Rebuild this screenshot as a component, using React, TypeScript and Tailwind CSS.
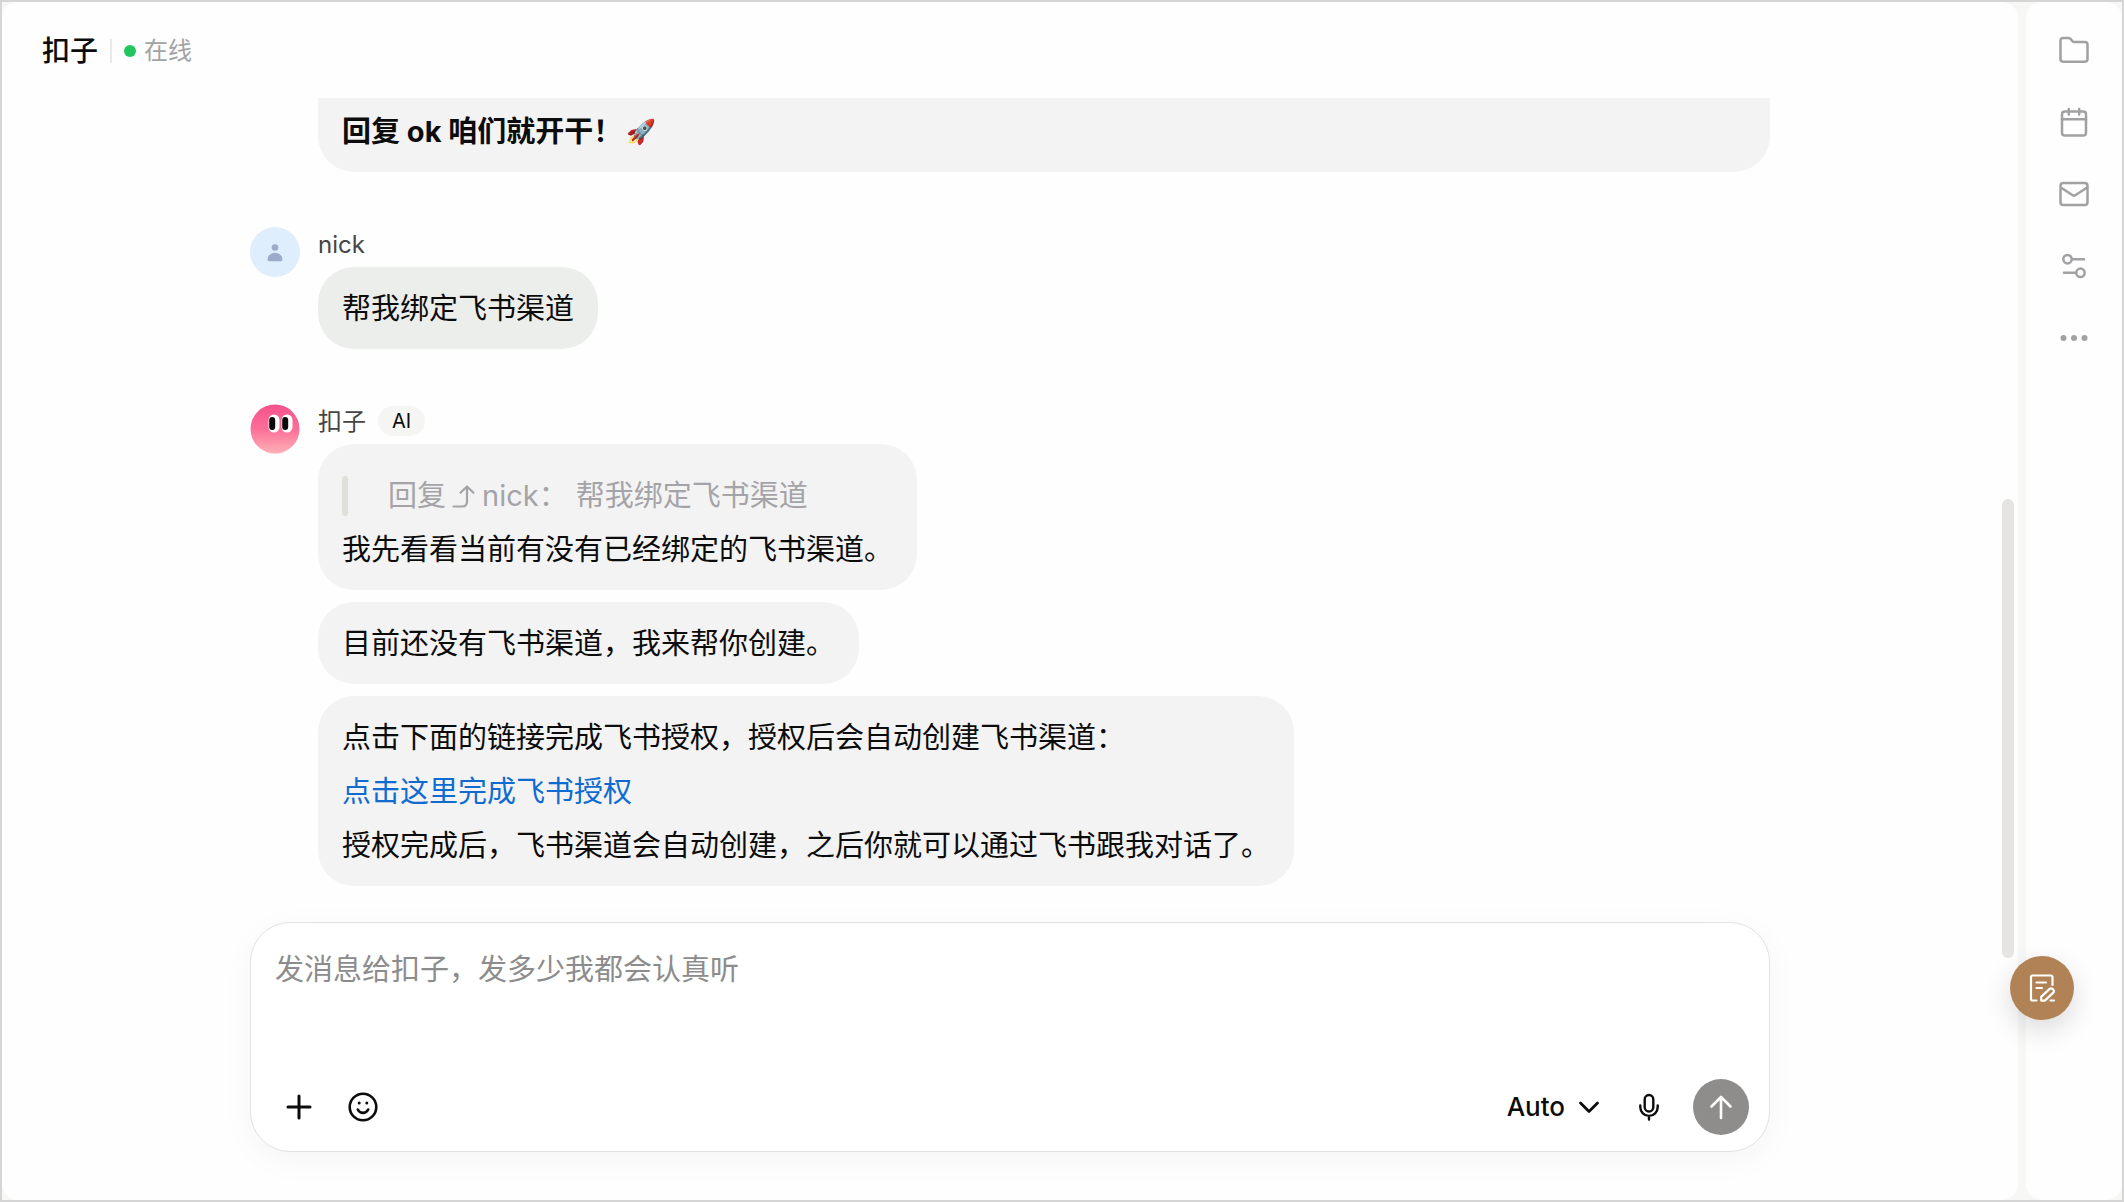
import type { ReactNode } from 'react';

const iconStroke = {
  fill: 'none',
  stroke: 'currentColor',
  strokeLinecap: 'round',
  strokeLinejoin: 'round',
} as const;

function FolderIcon() {
  return (
    <svg className="size-8" viewBox="0 0 32 32" strokeWidth="2.5" {...iconStroke}>
      <path d="M2.5 6.5a2.6 2.6 0 0 1 2.6-2.6h5.2c1 0 1.8.4 2.4 1.2l1.5 2c.5.7 1.2 1 2 1h10.7a2.6 2.6 0 0 1 2.6 2.6v14.4a2.6 2.6 0 0 1-2.6 2.6H5.1a2.6 2.6 0 0 1-2.6-2.6z" />
    </svg>
  );
}

function CalendarIcon() {
  return (
    <svg className="size-8" viewBox="0 0 32 32" strokeWidth="2.5" {...iconStroke}>
      <rect x="4" y="5.5" width="24" height="24" rx="2.8" />
      <path d="M4 13.2h24M10.8 3v5.5M21.2 3v5.5" />
    </svg>
  );
}

function MailIcon() {
  return (
    <svg className="size-8" viewBox="0 0 32 32" strokeWidth="2.5" {...iconStroke}>
      <rect x="2.5" y="5" width="27" height="22" rx="2.8" />
      <path d="M3.2 9.8 14.7 17.2a2.4 2.4 0 0 0 2.6 0L28.8 9.8" />
    </svg>
  );
}

function SlidersIcon() {
  return (
    <svg className="size-8" viewBox="0 0 32 32" strokeWidth="2.5" {...iconStroke}>
      <circle cx="9.5" cy="9.2" r="4.2" />
      <path d="M14 9.2h12M6 22.8h12" />
      <circle cx="22.5" cy="22.8" r="4.2" />
    </svg>
  );
}

function MoreIcon() {
  return (
    <svg className="size-8" viewBox="0 0 32 32" fill="currentColor">
      <circle cx="5.5" cy="16" r="3" />
      <circle cx="16" cy="16" r="3" />
      <circle cx="26.5" cy="16" r="3" />
    </svg>
  );
}

function NoteEditIcon() {
  return (
    <svg className="size-8" viewBox="0 0 32 32" strokeWidth="2.2" {...iconStroke}>
      <path d="M10.5 28.5h-4a1.500 1.500 0 0 1-1.500-1.500V5a1.500 1.500 0 0 1 1.500-1.500h18.500a1.500 1.500 0 0 1 1.500 1.500v8" />
      <path d="M10.5 10.5h9.5M10.5 16h5.5M24.5 28.5h3.5" />
      <path d="M15.2 28.6v-3.7l8.4-8a2 2 0 0 1 2.9 0l.8.8a2 2 0 0 1 0 2.9l-8.4 8z" />
    </svg>
  );
}

function UserAvatar() {
  return (
    <svg className="size-[50px] shrink-0" viewBox="0 0 50 50">
      <circle cx="25" cy="25" r="25" fill="#dfeefc" />
      <circle cx="25" cy="20.5" r="3.3" fill="#9cabc9" />
      <path d="M17.6 32.5c0-4 3.3-6.8 7.4-6.8s7.4 2.8 7.4 6.8c0 1-.6 1.7-1.6 1.7H19.2c-1 0-1.6-.7-1.6-1.7z" fill="#9cabc9" />
    </svg>
  );
}

function BotAvatar() {
  return (
    <svg className="size-[50px] shrink-0" viewBox="0 0 50 50">
      <defs>
        <linearGradient id="bot-face" x1="0" y1="0" x2="0" y2="1">
          <stop offset="0" stopColor="#f4528d" />
          <stop offset="0.5" stopColor="#fb6f98" />
          <stop offset="1" stopColor="#ffb0b6" />
        </linearGradient>
      </defs>
      <circle cx="25" cy="25" r="24.5" fill="url(#bot-face)" />
      <rect x="18.5" y="10.5" width="11" height="18" rx="5.5" fill="#fff" />
      <rect x="31.5" y="10.5" width="11" height="18" rx="5.5" fill="#fff" />
      <rect x="19.2" y="13" width="6" height="13" rx="3" fill="#0a0a0a" />
      <rect x="32.2" y="13" width="6" height="13" rx="3" fill="#0a0a0a" />
    </svg>
  );
}

function Bubble({ className = 'bg-[#f3f3f3]', children }: { className?: string; children: ReactNode }) {
  return <div className={`w-fit rounded-[36px] px-6 pt-[15px] pb-[13px] ${className}`}>{children}</div>;
}

function Message({ avatar, name, badge, children }: { avatar: ReactNode; name: string; badge?: string; children: ReactNode }) {
  return (
    <article className="flex gap-[18px]">
      {avatar}
      <div className="min-w-0 flex-1">
        <div className="flex h-10 items-start gap-3">
          <span className="text-2xl leading-9 text-[#454545]">{name}</span>
          {badge && <span className="mt-0.5 rounded-full bg-[#f5f5f4] px-3.5 text-xl leading-[30px]">{badge}</span>}
        </div>
        <div className="flex flex-col gap-3">{children}</div>
      </div>
    </article>
  );
}

const tools = [
  { label: '文件', icon: <FolderIcon /> },
  { label: '日历', icon: <CalendarIcon /> },
  { label: '邮件', icon: <MailIcon /> },
  { label: '设置', icon: <SlidersIcon /> },
  { label: '更多', icon: <MoreIcon /> },
];

export default function App() {
  return (
    <div
      lang="zh-CN"
      className="relative flex h-screen gap-2 overflow-hidden border-2 border-[#d4d5d4] bg-[#f7f7f5] font-['Inter','Noto_Sans_CJK_SC',sans-serif] text-[29px] leading-[54px] text-[#0c0c0c]"
    >
      <main className="relative flex min-w-0 flex-1 flex-col rounded-2xl bg-[#fefefe]">
        <header className="flex h-24 shrink-0 items-center px-10 pt-0.5">
          <h1 className="text-[28px] font-medium">扣子</h1>
          <span className="mx-3 h-6 w-0.5 bg-[#e8e8e8]" />
          <span className="size-3 rounded-full bg-[#22c55e]" />
          <span className="ml-2 text-2xl text-[#a3a3a3]">在线</span>
        </header>

        <section className="flex min-h-0 flex-1 flex-col justify-end overflow-hidden px-8 pb-9">
          <div className="mx-auto flex w-full max-w-[1520px] flex-col gap-[55px]">
            <div className="ml-[68px] flex items-center gap-1 rounded-b-[36px] bg-[#f3f3f3] px-6 pt-[7px] pb-[13px] font-bold">
              回复 ok 咱们就开干！
              <span className="text-2xl">🚀</span>
            </div>

            <Message avatar={<UserAvatar />} name="nick">
              <Bubble className="bg-[#eceeec]">帮我绑定飞书渠道</Bubble>
            </Message>

            <Message avatar={<BotAvatar />} name="扣子" badge="AI">
              <Bubble>
                <blockquote className="mt-[17px] mb-[7px] flex h-10 items-center text-[#a4a4a8]">
                  <span className="h-full w-1.5 rounded-sm bg-[#dfe0d9]" />
                  <span className="ml-10">回复</span>
                  <svg className="mx-1.5 size-6" viewBox="0 0 24 24" strokeWidth="2.2" {...iconStroke}>
                    <path d="M1.5 22.5H10c3 0 5-2 5-5V3M8.5 8.8 15 2.5l6.5 6.3" />
                  </svg>
                  <span>nick： 帮我绑定飞书渠道</span>
                </blockquote>
                <p>我先看看当前有没有已经绑定的飞书渠道。</p>
              </Bubble>
              <Bubble>目前还没有飞书渠道，我来帮你创建。</Bubble>
              <Bubble>
                <p>点击下面的链接完成飞书授权，授权后会自动创建飞书渠道：</p>
                <p>
                  <a href="#auth" className="text-[#0f6bcf]">点击这里完成飞书授权</a>
                </p>
                <p>授权完成后，飞书渠道会自动创建，之后你就可以通过飞书跟我对话了。</p>
              </Bubble>
            </Message>
          </div>
        </section>

        <div className="shrink-0 px-8 pb-12">
          <form className="mx-auto w-full max-w-[1520px] rounded-[40px] border border-[#e2e2e2] bg-white px-5 pt-5 pb-4 shadow-[0_8px_32px_rgba(0,0,0,0.04)]">
            <textarea
              aria-label="消息"
              rows={2}
              placeholder="发消息给扣子，发多少我都会认真听"
              className="block h-[136px] w-full resize-none px-1 outline-none placeholder:text-[#8c8c8c]"
            />
            <div className="flex h-14 items-center">
              <button type="button" aria-label="添加" className="ml-3">
                <svg className="size-8" viewBox="0 0 32 32" strokeWidth="3" {...iconStroke}>
                  <path d="M16 5v22M5 16h22" />
                </svg>
              </button>
              <button type="button" aria-label="表情" className="ml-8">
                <svg className="size-8" viewBox="0 0 32 32" strokeWidth="2.6" {...iconStroke}>
                  <circle cx="16" cy="16" r="13.3" />
                  <path d="M10.8 18.5c1 2.2 3 3.4 5.2 3.4s4.2-1.2 5.2-3.4" />
                  <circle cx="12.2" cy="12" r="1.5" fill="currentColor" stroke="none" />
                  <circle cx="19.8" cy="12" r="1.5" fill="currentColor" stroke="none" />
                </svg>
              </button>
              <button type="button" className="ml-auto flex items-center gap-3 text-[26px] font-medium">
                Auto
                <svg className="size-6" viewBox="0 0 24 24" strokeWidth="2.8" {...iconStroke}>
                  <path d="m3.5 8 8.5 8.5L20.5 8" />
                </svg>
              </button>
              <button type="button" aria-label="语音输入" className="ml-8">
                <svg className="size-8" viewBox="0 0 32 32" strokeWidth="2.4" {...iconStroke}>
                  <rect x="11.7" y="4" width="8.6" height="16.5" rx="4.3" />
                  <path d="M7.3 14.5v1.7a8.7 8.7 0 0 0 17.4 0v-1.7M16 25v3.5" />
                </svg>
              </button>
              <button
                type="submit"
                aria-label="发送"
                className="ml-7 flex size-14 items-center justify-center rounded-full bg-[#8e8d8c] text-white"
              >
                <svg className="size-8" viewBox="0 0 32 32" strokeWidth="2.6" {...iconStroke}>
                  <path d="M16 27V6M6.5 15.5 16 6l9.5 9.5" />
                </svg>
              </button>
            </div>
          </form>
        </div>

        {/* scrollbar thumb */}
        <div className="absolute top-[41.5%] right-1 h-[38.3%] w-3 rounded-full bg-[#e6e5e3]" />
      </main>

      <aside className="w-24 shrink-0 rounded-2xl bg-[#fefefe]">
        <nav className="flex flex-col items-center gap-10 pt-8 text-[#a1a1a3]">
          {tools.map((tool) => (
            <button key={tool.label} type="button" aria-label={tool.label}>
              {tool.icon}
            </button>
          ))}
        </nav>
      </aside>

      <button
        type="button"
        aria-label="写笔记"
        className="absolute right-12 bottom-[180px] flex size-16 items-center justify-center rounded-full bg-[#b08255] text-white shadow-[0_10px_28px_rgba(0,0,0,0.14)]"
      >
        <NoteEditIcon />
      </button>
    </div>
  );
}
